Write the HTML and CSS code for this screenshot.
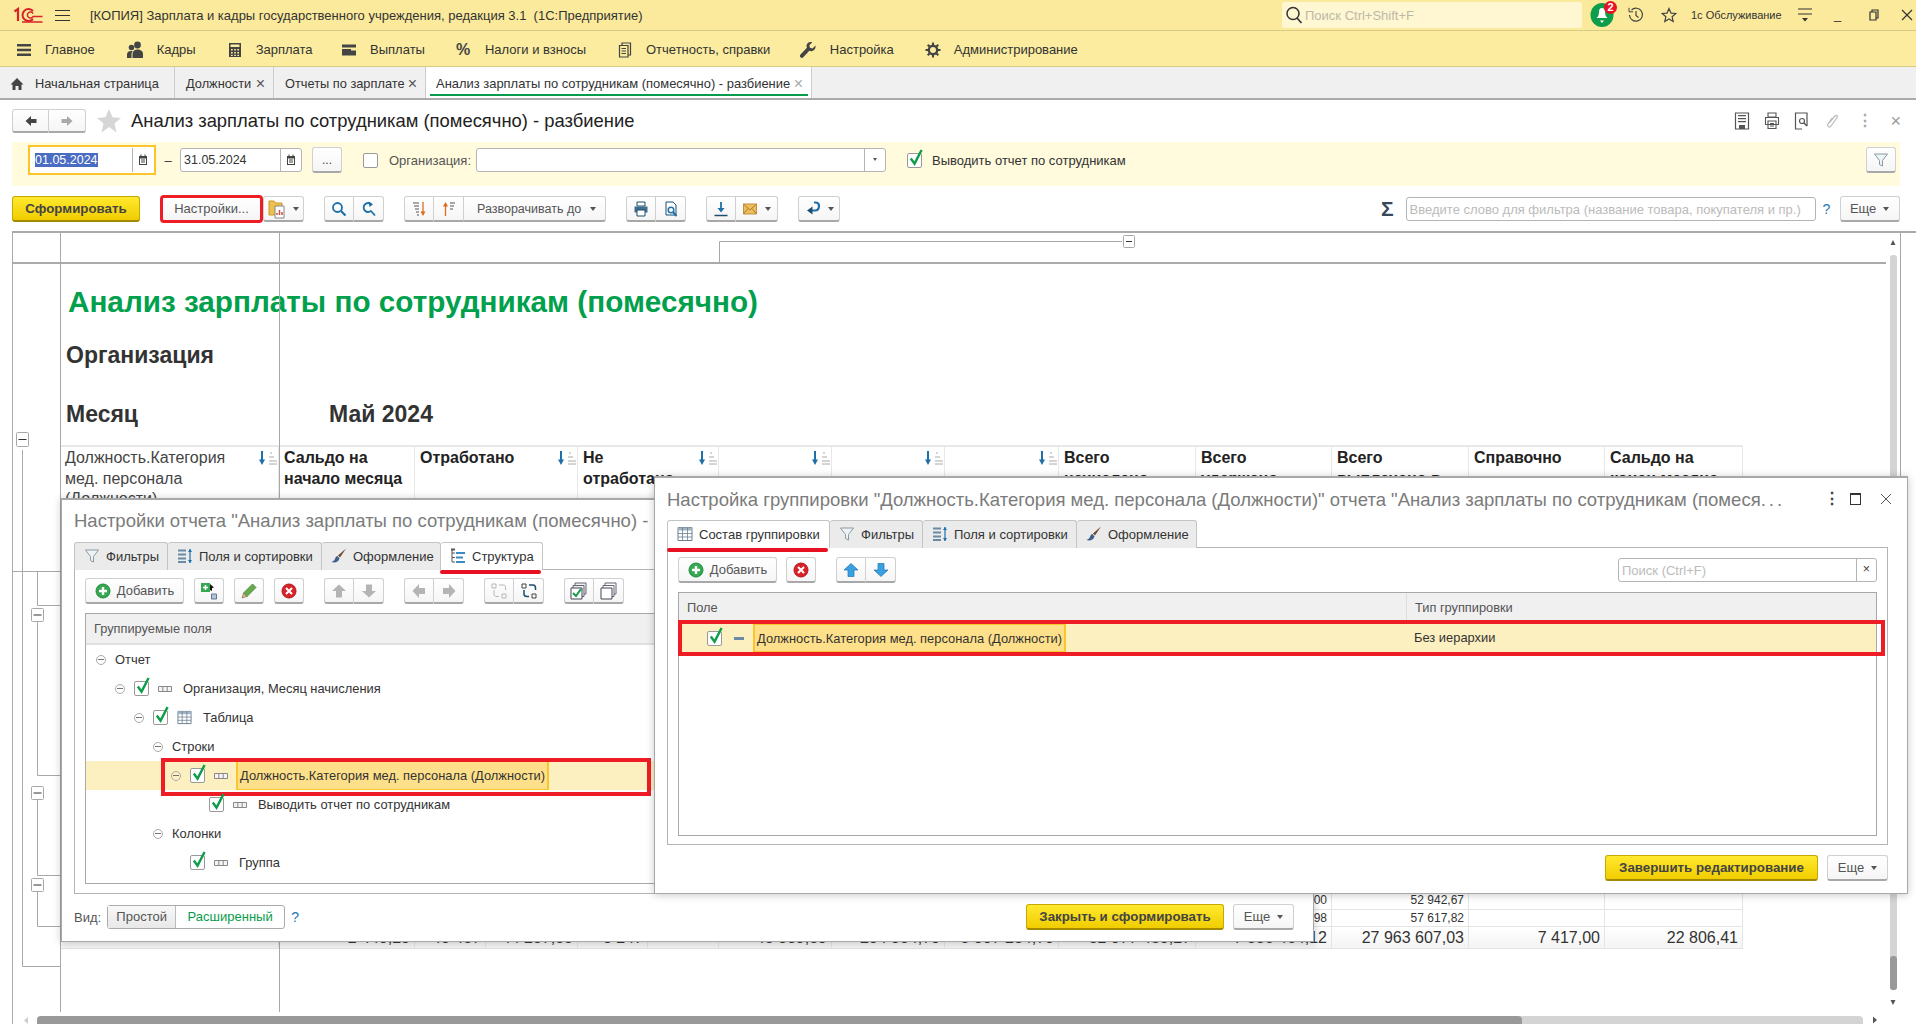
FILE: index.html
```html
<!DOCTYPE html>
<html lang="ru">
<head>
  <meta charset="UTF-8">
  <title>Анализ зарплаты по сотрудникам (помесячно) - разбиение</title>
  <link rel="stylesheet" href="styles.css">
</head>
<body>
  <svg class="sprite" aria-hidden="true">
    <symbol id="i-menu" viewBox="0 0 16 16"><path d="M1 2h14v2.4H1zM1 6.8h14v2.4H1zM1 11.6h14V14H1z" fill="#444"/></symbol>
    <symbol id="i-people" viewBox="0 0 18 18"><circle cx="11.5" cy="4" r="3.4" fill="#444"/><path d="M6.5 17v-4c0-3 2-4.500 5-4.500s5.500 1.500 5.500 4.500v4z" fill="#444"/><circle cx="5.500" cy="6.500" r="2.800" fill="#444"/><path d="M1 17v-3.500c0-2.500 1.800-3.500 4-3.500.6 0 1.200.1 1.700.3-.8.800-1.200 2-1.200 3.200V17z" fill="#444"/></symbol>
    <symbol id="i-calc" viewBox="0 0 16 16"><path fill-rule="evenodd" d="M2 1h12v14H2zM3.500 2.500v2.500h9V2.500zM4 7v1.500h1.700V7zM7.200 7v1.500h1.700V7zM10.300 7v1.500H12V7zM4 10v1.500h1.700V10zM7.200 10v1.500h1.700V10zM10.300 10v1.500H12V10zM4 12.700V14h1.700v-1.300zM7.200 12.700V14h1.700v-1.300zM10.300 12.700V14H12v-1.300z" fill="#444"/></symbol>
    <symbol id="i-wallet" viewBox="0 0 16 16"><path fill-rule="evenodd" d="M1 2.500h14v11H1zM1 5.500h14V7H10v1.500h5V7H1z" fill="#444"/></symbol>
    <symbol id="i-docs" viewBox="0 0 16 16"><path d="M5 3.500V1h8.500v12H11M2.500 3.500H11V15H2.500zM4.500 6.500h4.500M4.500 9h4.500M4.500 11.500h4.500" fill="none" stroke="#444" stroke-width="1.200"/></symbol>
    <symbol id="i-wrench" viewBox="0 0 18 18"><path d="M16.500 4.500l-3 3-2.500-.8-.7-2.500 3-3c-2.500-.9-5 .3-5.600 2.500-.3 1-.2 2 .2 3L1.500 13.500c-.8.900-.8 2 0 2.800s2 .8 2.800 0l6-6.500c1 .4 2 .5 3 .2 2.300-.7 3.700-3 3.200-5.500z" fill="#444"/></symbol>
    <symbol id="i-gear" viewBox="0 0 16 16"><circle cx="8" cy="8" r="4.200" fill="none" stroke="#444" stroke-width="2.400"/><path d="M8 .5v3M8 12.500v3M.5 8h3M12.500 8h3M2.700 2.700l2.100 2.100M11.200 11.200l2.100 2.100M2.700 13.300l2.100-2.100M11.200 4.800l2.100-2.100" stroke="#444" stroke-width="2"/></symbol>
    <symbol id="i-home" viewBox="0 0 14 14"><path d="M7 1L.5 7.500h2V13h3V9h3v4h3V7.500h2z" fill="#444"/></symbol>
    <symbol id="i-left" viewBox="0 0 14 14"><path d="M7 2L1.500 7 7 12V9h5.500V5H7z"/></symbol>
    <symbol id="i-right" viewBox="0 0 14 14"><path d="M7 2l5.500 5L7 12V9H1.500V5H7z"/></symbol>
    <symbol id="i-star" viewBox="0 0 24 24"><path d="M12 0l3.500 8.200 8.500.7-6.500 5.700 2 8.900L12 18l-7.500 5.500 2-8.900L0 8.900l8.500-.7z" fill="#d6d6d6"/></symbol>
    <symbol id="i-star-o" viewBox="0 0 16 16"><path d="M8 1.500l2 4.600 4.800.4-3.700 3.200 1.100 4.800L8 12l-4.200 2.500 1.100-4.800-3.700-3.200L6 6.100z" fill="none" stroke="#444" stroke-width="1.200"/></symbol>
    <symbol id="i-cal" viewBox="0 0 10 12"><path fill-rule="evenodd" d="M1 2h1.500V.5h1V2h3V.5h1V2H9v9H1zM2 4.500V10h6V4.500z" fill="#444"/><path d="M3 5.500h4v1H3zM3 7.500h4v1H3z" fill="#444"/></symbol>
    <symbol id="i-funnel" viewBox="0 0 16 16"><path d="M1.500 2h13L9.500 8.500V14l-3-1.500v-4z" fill="#eef3f6" stroke="#8a9aa5"/></symbol>
    <symbol id="i-lens" viewBox="0 0 16 16"><circle cx="6.500" cy="6.500" r="4.500" fill="none" stroke="#1f6fa8" stroke-width="1.800"/><path d="M10 10l4.500 4.500" stroke="#1f6fa8" stroke-width="2.200"/></symbol>
    <symbol id="i-lens-r" viewBox="0 0 16 16"><path d="M10.500 3.500A4.500 4.500 0 1 0 10.500 9.500M10 10l4 4.500" fill="none" stroke="#1f6fa8" stroke-width="1.800"/><path d="M7.500 .5L12 3.500 8.500 6z" fill="#1f6fa8"/></symbol>
    <symbol id="i-lens-k" viewBox="0 0 18 18"><circle cx="8" cy="7.500" r="6" fill="none" stroke="#333" stroke-width="1.500"/><path d="M12 12l4.500 5" stroke="#333" stroke-width="1.700"/></symbol>
    <symbol id="i-sortdn" viewBox="0 0 16 16"><path d="M12 1v11" stroke="#e06a1f" stroke-width="1.300"/><path d="M9.500 10.500h5L12 15z" fill="#e06a1f"/><path d="M2 2h6M3 5h5M4 8h4M5 11h3M6 14h2" stroke="#555"/></symbol>
    <symbol id="i-sortup" viewBox="0 0 16 16"><path d="M4.500 15V4" stroke="#e06a1f" stroke-width="1.300"/><path d="M2 5.500h5L4.500 1z" fill="#e06a1f"/><path d="M9 2h5M9 5h4M9 8h3" stroke="#555"/></symbol>
    <symbol id="i-report" viewBox="0 0 18 20"><path d="M1 2h5l1.500 2H14v12H1z" fill="#edc04f" stroke="#c99a2a"/><path d="M7 7h9v12H7z" fill="#fff" stroke="#888"/><path d="M9 16v-2M11.500 16v-5M14 16v-3" stroke="#d0503c" stroke-width="1.500"/></symbol>
    <symbol id="i-print" viewBox="0 0 16 16"><path d="M4 1h8v4H4z" fill="#fff" stroke="#1d4f6e"/><path d="M1.500 5.500h13v6h-13z" fill="#3d6d8a"/><path d="M4 9h8v6H4z" fill="#fff" stroke="#1d4f6e"/></symbol>
    <symbol id="i-preview" viewBox="0 0 16 16"><path d="M3 1h7l3 3v10H3z" fill="#fff" stroke="#1d4f6e"/><circle cx="8" cy="9" r="2.800" fill="none" stroke="#1f6fa8" stroke-width="1.500"/><path d="M10 11l3.500 4" stroke="#1f6fa8" stroke-width="2"/></symbol>
    <symbol id="i-down" viewBox="0 0 16 16"><path d="M8 1v9" stroke="#1f6fa8" stroke-width="1.800"/><path d="M4.500 7h7L8 11.500z" fill="#1f6fa8"/><path d="M1.500 14.500h13" stroke="#1d4f6e" stroke-width="1.500"/></symbol>
    <symbol id="i-mail" viewBox="0 0 16 16"><path d="M1.500 3h13v10h-13z" fill="#eebd62" stroke="#c0913c"/><path d="M1.500 3L8 9l6.500-6M1.500 13L6 7.500M14.500 13L10 7.500" fill="none" stroke="#b07c24"/></symbol>
    <symbol id="i-undo" viewBox="0 0 16 16"><path d="M9 1.500h1.500c2.500 0 3.500 1.500 3.500 3.500s-1 4.500-4 4.500H7" fill="none" stroke="#1f6fa8" stroke-width="2.200"/><path d="M7.500 5.500L2 9.500l5.500 4z" fill="#1d4f6e"/></symbol>
    <symbol id="i-save" viewBox="0 0 16 18"><path d="M1.500 1h13v16h-13z" fill="none" stroke="#555" stroke-width="1.200"/><path d="M4 3h8v1.200H4zM4 6h8v1.200H4zM4 9h8v1.200H4zM5 13h6v4H5z" fill="#555"/></symbol>
    <symbol id="i-print-g" viewBox="0 0 16 18"><path d="M4 1h8v4H4zM1.500 5.500h13v7h-13zM4 9h8v7.500H4zM6 11.500h4M6 14h4" fill="#fff" stroke="#555" stroke-width="1.100"/></symbol>
    <symbol id="i-prev-g" viewBox="0 0 16 18"><path d="M13 14V1H1.500v16H8" fill="none" stroke="#555" stroke-width="1.200"/><circle cx="8" cy="9" r="2.500" fill="none" stroke="#555" stroke-width="1.200"/><path d="M10 11l3 3" stroke="#555" stroke-width="1.500"/></symbol>
    <symbol id="i-link" viewBox="0 0 16 18"><path d="M5 11l6-7c1-1.200 3-.2 2.300 1.300L7 14c-1.200 2-4.200.6-3.300-1.500L8 6" fill="none" stroke="#bbb" stroke-width="1.200"/></symbol>
    <symbol id="i-plus" viewBox="0 0 16 16"><circle cx="8" cy="8" r="7" fill="#35a853" stroke="#1f8c3e"/><path d="M4 8h8M8 4v8" stroke="#fff" stroke-width="2.400"/></symbol>
    <symbol id="i-del" viewBox="0 0 16 16"><circle cx="8" cy="8" r="7" fill="#d8232a" stroke="#b3161c"/><path d="M5 5l6 6M11 5l-6 6" stroke="#fff" stroke-width="2"/></symbol>
    <symbol id="i-addsub" viewBox="0 0 18 18"><path d="M1 1h9v9H1z" fill="#35a853"/><path d="M3 5.500h5M5.500 3v5" stroke="#fff" stroke-width="1.500"/><path d="M10 2l4 3.500-2 .5v3L10 8z" fill="#111"/><path d="M11.500 12h5v5h-5z" fill="#b9c6d2" stroke="#5d7a92"/></symbol>
    <symbol id="i-pencil" viewBox="0 0 16 16"><path d="M11.500 1L15 4.500 6 13.500 2.500 10z" fill="#68a94e" stroke="#4a8735" stroke-width=".8"/><path d="M2.500 10L6 13.500 1 15z" fill="#e2b46b" stroke="#555" stroke-width=".5"/></symbol>
    <symbol id="i-up-g" viewBox="0 0 16 16"><path d="M8 1.500L15 8h-4v6.500H5V8H1z" fill="#b4b4b4"/></symbol>
    <symbol id="i-dn-g" viewBox="0 0 16 16"><path d="M8 14.500L15 8h-4V1.500H5V8H1z" fill="#b4b4b4"/></symbol>
    <symbol id="i-lt-g" viewBox="0 0 16 16"><path d="M1.500 8L8 1v4h6v6H8v4z" fill="#b4b4b4"/></symbol>
    <symbol id="i-rt-g" viewBox="0 0 16 16"><path d="M14.500 8L8 1v4H2v6h6v4z" fill="#b4b4b4"/></symbol>
    <symbol id="i-up-b" viewBox="0 0 16 16"><path d="M8 1.500L15 8h-4v6.500H5V8H1z" fill="#3aa0e4" stroke="#2274ab" stroke-width=".7"/></symbol>
    <symbol id="i-dn-b" viewBox="0 0 16 16"><path d="M8 14.500L15 8h-4V1.500H5V8H1z" fill="#3aa0e4" stroke="#2274ab" stroke-width=".7"/></symbol>
    <symbol id="i-swap-g" viewBox="0 0 18 18"><path d="M2 2h4v4H2zM12 12h4v4h-4z" fill="none" stroke="#b8b8b8"/><path d="M9 3h4c2 0 2.500 1 2.500 3v2M4 8v4c0 2 1 2.500 3 2.500h2" fill="none" stroke="#b8b8b8"/></symbol>
    <symbol id="i-swap" viewBox="0 0 18 18"><path d="M2 2h4v4H2zM12 12h4v4h-4z" fill="none" stroke="#444"/><path d="M9 3h4c2 0 2.500 1 2.500 3v2M4 8v4c0 2 1 2.500 3 2.500h2" fill="none" stroke="#1d4f6e" stroke-width="1.500"/></symbol>
    <symbol id="i-checks" viewBox="0 0 18 18"><path d="M5 1h11v11H5z" fill="#eee" stroke="#667"/><path d="M3 3.500h11v11H3z" fill="#eee" stroke="#667"/><path d="M1 6h11v11H1z" fill="#fff" stroke="#445"/><path d="M3 11l3 3 5-7" fill="none" stroke="#129c4b" stroke-width="2"/></symbol>
    <symbol id="i-copies" viewBox="0 0 18 18"><path d="M5 1h11v11H5z" fill="#fff" stroke="#667"/><path d="M3 3.500h11v11H3z" fill="#fff" stroke="#667"/><path d="M1 6h11v11H1z" fill="#fff" stroke="#445"/></symbol>
    <symbol id="i-fields" viewBox="0 0 16 16"><path d="M1 1.500h8v2H1zM1 5.500h8v2H1zM1 9.500h8v2H1zM1 13h8v2H1z" fill="#6a8ba3"/><path d="M13 1v14" stroke="#1f6fa8" stroke-width="1.200"/><path d="M11 4l2-3 2 3zM11 12l2 3 2-3z" fill="#1f6fa8"/></symbol>
    <symbol id="i-brush" viewBox="0 0 16 16"><path d="M15 .5L7 7.500l2 2z" fill="#6d4a2e"/><path d="M6.500 8C4 8.500 4.500 11 3 12.500c-.7.700-1.500 1-2.500 1.500 3 1 7 .5 8-3.500z" fill="#3f5e8c"/></symbol>
    <symbol id="i-tree" viewBox="0 0 16 16"><path d="M2 1v13h3M2 5h3M2 9.500h3" fill="none" stroke="#555"/><path d="M1 .5h4v2H1z" fill="#555"/><path d="M6 4h9v2H6zM6 8.500h7v2H6zM6 13h9v2H6z" fill="#3b8ac4"/></symbol>
    <symbol id="i-table" viewBox="0 0 16 16"><path d="M1 1.500h14v13H1z" fill="#fff" stroke="#6a7f90"/><path d="M1 1.500h14v3H1z" fill="#9fb3c2"/><path d="M5.500 1.500v13M10.500 1.500v13M1 7.500h14M1 11h14" stroke="#6a7f90" stroke-width=".8"/></symbol>
    <symbol id="i-group" viewBox="0 0 14 8"><path d="M.5 1.500h13v5H.5zM4.800 1.500v5M9.200 1.500v5" fill="#f4f4f4" stroke="#888"/></symbol>
    <symbol id="i-check" viewBox="0 0 16 18"><path d="M3 10l4 5.500L14.500 1" fill="none" stroke="#0e9d4b" stroke-width="2.600"/></symbol>
    <symbol id="i-sort" viewBox="0 0 20 16"><path d="M4 1v10" stroke="#1f6fa8" stroke-width="2"/><path d="M1 9.500h6L4 15z" fill="#1f6fa8"/><path d="M12 3h2M11 7h5M11 11h8M11 14h8" stroke="#aaa"/></symbol>
    <symbol id="i-bell" viewBox="0 0 24 24"><ellipse cx="12" cy="12" rx="11.500" ry="12" fill="#0e9d4b"/><path d="M12 5c-2 0-3 1.500-3 4 0 3-1 5-2.500 6h11C16 14 15 12 15 9c0-2.500-1-4-3-4z" fill="#fff"/><path d="M10 17.500h4L12 20z" fill="#fff"/></symbol>
    <symbol id="i-hist" viewBox="0 0 16 16"><path d="M3.500 3A6.500 6.500 0 1 1 1.500 8" fill="none" stroke="#444" stroke-width="1.200"/><path d="M1 .8v4h4" fill="none" stroke="#444"/><path d="M8 4v4.500l2.500 2" fill="none" stroke="#444" stroke-width="1.200"/></symbol>
  </svg>

  <header class="titlebar">
    <svg class="logo" viewBox="0 0 30 16"><g fill="none" stroke="#d8232a"><path d="M1.500 4.500L5 2v12" stroke-width="2.200"/><path d="M20 4a6 6 0 1 0 0 8" stroke-width="2"/><path d="M20 6.500a3 3 0 1 0 0 3h9.500M9 15h20.500" stroke-width="1.500"/></g></svg>
    <svg class="burger" viewBox="0 0 15 13"><path d="M0 1.500h15M0 6.500h15M0 11.500h15" stroke="#333" stroke-width="1.200"/></svg>
    <span class="app-title">[КОПИЯ] Зарплата и кадры государственного учреждения, редакция 3.1&nbsp; (1С:Предприятие)</span>
    <div class="globalsearch"><svg class="ic18"><use href="#i-lens-k"/></svg><span>Поиск Ctrl+Shift+F</span></div>
    <div class="bell"><svg class="ic-bell"><use href="#i-bell"/></svg><b class="badge">2</b></div>
    <svg class="ic16 hist"><use href="#i-hist"/></svg>
    <svg class="ic16 fav"><use href="#i-star-o"/></svg>
    <span class="user">1с Обслуживание</span>
    <svg class="winmenu" viewBox="0 0 14 14"><path d="M0 1h14M0 6h14" stroke="#333" stroke-width="1.200"/><path d="M4 10h6l-3 3.500z" fill="#333"/></svg>
    <span class="winbtn min">_</span>
    <svg class="winbtn-ic" viewBox="0 0 10 12"><path d="M3 3V1h6v8H7M1 3h6v8H1z" fill="none" stroke="#333" stroke-width="1.200"/></svg>
    <svg class="winbtn-x" viewBox="0 0 12 12"><path d="M1 1l10 10M11 1L1 11" stroke="#333" stroke-width="1.200"/></svg>
  </header>

  <nav class="mainmenu">
    <a class="nav-item"><svg class="ic16"><use href="#i-menu"/></svg>Главное</a>
    <a class="nav-item"><svg class="ic18"><use href="#i-people"/></svg>Кадры</a>
    <a class="nav-item"><svg class="ic16"><use href="#i-calc"/></svg>Зарплата</a>
    <a class="nav-item nav-tight"><svg class="ic16"><use href="#i-wallet"/></svg>Выплаты</a>
    <a class="nav-item"><b class="pct">%</b>Налоги и взносы</a>
    <a class="nav-item"><svg class="ic16"><use href="#i-docs"/></svg>Отчетность, справки</a>
    <a class="nav-item nav-tight"><svg class="ic18"><use href="#i-wrench"/></svg>Настройка</a>
    <a class="nav-item"><svg class="ic16"><use href="#i-gear"/></svg>Администрирование</a>
  </nav>

  <div class="pagetabs">
    <div class="ptab ptab-home"><svg class="ic14"><use href="#i-home"/></svg>Начальная страница</div>
    <div class="ptab ptab-pos">Должности<span class="x">×</span></div>
    <div class="ptab ptab-rep">Отчеты по зарплате<span class="x">×</span></div>
    <div class="ptab ptab-active">Анализ зарплаты по сотрудникам (помесячно) - разбиение<span class="x">×</span></div>
  </div>

  <div class="formhead">
    <div class="btn-group navback">
      <button class="btn icon-btn back"><svg class="ic14"><use href="#i-left"/></svg></button>
      <button class="btn icon-btn fwd"><svg class="ic14"><use href="#i-right"/></svg></button>
    </div>
    <svg class="bigstar"><use href="#i-star"/></svg>
    <h1>Анализ зарплаты по сотрудникам (помесячно) - разбиение</h1>
    <div class="formicons">
      <svg class="ic-form"><use href="#i-save"/></svg>
      <svg class="ic-form"><use href="#i-print-g"/></svg>
      <svg class="ic-form"><use href="#i-prev-g"/></svg>
      <svg class="ic-form"><use href="#i-link"/></svg>
      <span class="kebab gray">⋮</span>
      <span class="formclose">×</span>
    </div>
  </div>

  <div class="filterband">
    <div class="focusbox">
      <div class="field date"><span class="sel">01.05.2024</span><i class="cal"><svg class="ic-cal"><use href="#i-cal"/></svg></i></div>
    </div>
    <span class="dash">–</span>
    <div class="field date"><span>31.05.2024</span><i class="cal"><svg class="ic-cal"><use href="#i-cal"/></svg></i></div>
    <button class="btn dots">...</button>
    <span class="chk chk-org"></span>
    <label class="lbl-org">Организация:</label>
    <div class="field org"><i class="drop"></i></div>
    <span class="chk chk-emp"><svg class="tick"><use href="#i-check"/></svg></span>
    <label>Выводить отчет по сотрудникам</label>
    <button class="btn filterbtn"><svg class="ic16"><use href="#i-funnel"/></svg></button>
  </div>

  <div class="toolbar">
    <button class="btn btn-yellow form-btn">Сформировать</button>
    <button class="btn settings-btn">Настройки...</button>
    <button class="btn variant-btn"><svg class="ic-rep"><use href="#i-report"/></svg><i class="caret"></i></button>
    <div class="btn-group tb-gap">
      <button class="btn icon-btn"><svg class="ic16"><use href="#i-lens"/></svg></button>
      <button class="btn icon-btn"><svg class="ic16"><use href="#i-lens-r"/></svg></button>
    </div>
    <div class="btn-group tb-gap">
      <button class="btn icon-btn"><svg class="ic16"><use href="#i-sortdn"/></svg></button>
      <button class="btn icon-btn"><svg class="ic16"><use href="#i-sortup"/></svg></button>
      <button class="btn expand-btn">Разворачивать до<i class="caret"></i></button>
    </div>
    <div class="btn-group tb-gap">
      <button class="btn icon-btn"><svg class="ic16"><use href="#i-print"/></svg></button>
      <button class="btn icon-btn"><svg class="ic16"><use href="#i-preview"/></svg></button>
    </div>
    <div class="btn-group tb-gap">
      <button class="btn icon-btn"><svg class="ic16"><use href="#i-down"/></svg></button>
      <button class="btn mail-btn"><svg class="ic16"><use href="#i-mail"/></svg><i class="caret"></i></button>
    </div>
    <button class="btn mail-btn tb-gap"><svg class="ic16"><use href="#i-undo"/></svg><i class="caret"></i></button>
    <span class="sigma">Σ</span>
    <div class="field wordfilter"><span class="ph">Введите слово для фильтра (название товара, покупателя и пр.)</span></div>
    <a class="help">?</a>
    <button class="btn more-btn">Еще<i class="caret"></i></button>
  </div>

  <section class="sheet">
    <div class="sheet-head"></div>
    <div class="report">
      <div class="rep-title">Анализ зарплаты по сотрудникам (помесячно)</div>
      <div class="rep-org">Организация</div>
      <div class="rep-month"><span>Месяц</span><span class="month-val">Май 2024</span></div>
      <div class="rep-row rep-headrow">
        <div class="hc c-first">Должность.Категория мед. персонала (Должности)<svg class="sort"><use href="#i-sort"/></svg></div>
        <div class="hc hc-narrow"><b>Сальдо на начало месяца</b></div>
        <div class="hc span2"><b>Отработано</b><svg class="sort"><use href="#i-sort"/></svg></div>
        <div class="hc span2"><b>Не отработано</b><svg class="sort"><use href="#i-sort"/></svg></div>
        <div class="hc"><svg class="sort"><use href="#i-sort"/></svg></div>
        <div class="hc"><svg class="sort"><use href="#i-sort"/></svg></div>
        <div class="hc"><svg class="sort"><use href="#i-sort"/></svg></div>
        <div class="hc hc-narrow"><b>Всего начислено</b></div>
        <div class="hc hc-narrow"><b>Всего удержано</b></div>
        <div class="hc hc-narrow"><b>Всего выплачено в банк</b></div>
        <div class="hc hc-narrow"><b>Справочно</b></div>
        <div class="hc hc-narrow"><b>Сальдо на конец месяца</b></div>
      </div>
      <div class="rep-row rep-spacer"></div>
      <div class="rep-row rep-small">
        <div></div><div></div><div></div><div></div><div></div><div></div><div></div><div></div><div></div><div></div><div>1 204 518,00</div><div>52 942,67</div><div></div><div></div>
      </div>
      <div class="rep-row rep-small">
        <div></div><div></div><div></div><div></div><div></div><div></div><div></div><div></div><div></div><div></div><div>1 317 640,98</div><div>57 617,82</div><div></div><div></div>
      </div>
      <div class="rep-row rep-total">
        <div></div><div>2 440,25</div><div>40 437</div><div>44 257,05</div><div>3 247</div><div class="hash">########</div><div>48 889,89</div><div>204 954,70</div><div>5 907 234,70</div><div>32 977 430,27</div><div>7 586 464,12</div><div>27 963 607,03</div><div>7 417,00</div><div>22 806,41</div>
      </div>
    </div>

    <svg class="outline" viewBox="12 231 1889 793">
      <g fill="none" stroke="#a8a8a8">
        <path d="M60.500 231v781M279.500 231v781M1900.500 231v460"/>
        <path d="M719.500 264V241.500H1122"/>
        <path d="M22.500 450V966.500H60M12 571.500H60"/>
        <path d="M37.500 571v34.500H60M37.500 621V775.500H60M37.500 799V875.500H60M37.500 891V926.500H60"/>
        <g fill="#fff">
          <rect x="1123.500" y="235.500" width="11" height="12" rx="1"/>
          <rect x="16.500" y="432.500" width="12" height="14" rx="1"/>
          <rect x="31.500" y="608.500" width="12" height="13" rx="1"/>
          <rect x="31.500" y="786.500" width="12" height="13" rx="1"/>
          <rect x="31.500" y="878.500" width="12" height="13" rx="1"/>
        </g>
      </g>
      <path d="M1126 241.500h6M18.500 439.500h8M33.500 615h8M33.500 793h8M33.500 885h8" stroke="#333"/>
      <path d="M1893 240l-2.500 5h5zM1893 1005l-2.500-5h5z" fill="#555"/>
      <path d="M28 1017v7l-4-3.500z" fill="#ccc"/>
      <path d="M1873 1016.500v7l4-3.500z" fill="#555"/>
    </svg>
    <div class="vscroll"><div class="vthumb"></div></div>
    <div class="hscroll"><div class="hthumb"></div></div>
  </section>

  <div class="dialog dlg-settings">
    <div class="dlg-title">Настройки отчета "Анализ зарплаты по сотрудникам (помесячно) - разбиение"</div>
    <div class="dtabs">
      <div class="dtab tab-f"><svg class="ic16"><use href="#i-funnel"/></svg>Фильтры</div>
      <div class="dtab tab-s"><svg class="ic16"><use href="#i-fields"/></svg>Поля и сортировки</div>
      <div class="dtab tab-o"><svg class="ic16"><use href="#i-brush"/></svg>Оформление</div>
      <div class="dtab dtab-active marked tab-st"><svg class="ic16"><use href="#i-tree"/></svg>Структура</div>
    </div>
    <div class="dpanel panel-settings">
      <div class="dtoolbar">
        <button class="btn add-btn"><svg class="ic16"><use href="#i-plus"/></svg>Добавить</button>
        <button class="btn square"><svg class="ic18"><use href="#i-addsub"/></svg></button>
        <button class="btn square"><svg class="ic16"><use href="#i-pencil"/></svg></button>
        <button class="btn square"><svg class="ic16"><use href="#i-del"/></svg></button>
        <div class="btn-group g-sep">
          <button class="btn square"><svg class="ic16"><use href="#i-up-g"/></svg></button>
          <button class="btn square"><svg class="ic16"><use href="#i-dn-g"/></svg></button>
        </div>
        <div class="btn-group g-sep">
          <button class="btn square"><svg class="ic16"><use href="#i-lt-g"/></svg></button>
          <button class="btn square"><svg class="ic16"><use href="#i-rt-g"/></svg></button>
        </div>
        <div class="btn-group g-sep">
          <button class="btn square"><svg class="ic18"><use href="#i-swap-g"/></svg></button>
          <button class="btn square"><svg class="ic18"><use href="#i-swap"/></svg></button>
        </div>
        <div class="btn-group g-sep">
          <button class="btn square"><svg class="ic18"><use href="#i-checks"/></svg></button>
          <button class="btn square"><svg class="ic18"><use href="#i-copies"/></svg></button>
        </div>
      </div>
      <div class="dtable tree">
        <div class="thead"><span>Группируемые поля</span></div>
        <div class="trow lv0"><i class="minus"></i>Отчет</div>
        <div class="trow lv1"><i class="minus"></i><span class="chk"><svg class="tick"><use href="#i-check"/></svg></span><svg class="ic-group"><use href="#i-group"/></svg>Организация, Месяц начисления</div>
        <div class="trow lv2"><i class="minus"></i><span class="chk"><svg class="tick"><use href="#i-check"/></svg></span><svg class="ic-tbl"><use href="#i-table"/></svg>Таблица</div>
        <div class="trow lv3"><i class="minus"></i>Строки</div>
        <div class="trow lv4 trow-sel"><i class="minus"></i><span class="chk"><svg class="tick"><use href="#i-check"/></svg></span><svg class="ic-group"><use href="#i-group"/></svg><span class="curcell">Должность.Категория мед. персонала (Должности)</span><i class="redbox redbox-tree"></i></div>
        <div class="trow lv5"><span class="chk"><svg class="tick"><use href="#i-check"/></svg></span><svg class="ic-group"><use href="#i-group"/></svg>Выводить отчет по сотрудникам</div>
        <div class="trow lv3"><i class="minus"></i>Колонки</div>
        <div class="trow lv6"><span class="chk"><svg class="tick"><use href="#i-check"/></svg></span><svg class="ic-group"><use href="#i-group"/></svg>Группа</div>
      </div>
    </div>
    <div class="dfoot">
      <span class="vid">Вид:</span>
      <div class="seg"><span class="seg-on">Простой</span><span class="seg-off">Расширенный</span></div>
      <a class="help">?</a>
      <button class="btn btn-yellow close-btn">Закрыть и сформировать</button>
      <button class="btn more-btn">Еще<i class="caret"></i></button>
    </div>
  </div>

  <div class="dialog dlg-group">
    <div class="dlg-title dlg-title-row">
      <span class="dlg-title-text">Настройка группировки "Должность.Категория мед. персонала (Должности)" отчета "Анализ зарплаты по сотрудникам (помеся<span class="ell">...</span></span>
      <span class="kebab">⋮</span>
      <i class="maxbtn"></i>
      <svg class="dlgclose" viewBox="0 0 12 12"><path d="M1 1l10 10M11 1L1 11" stroke="#555"/></svg>
    </div>
    <div class="dtabs">
      <div class="dtab dtab-active marked tab-sost"><svg class="ic16"><use href="#i-table"/></svg>Состав группировки</div>
      <div class="dtab tab-f2"><svg class="ic16"><use href="#i-funnel"/></svg>Фильтры</div>
      <div class="dtab tab-s2"><svg class="ic16"><use href="#i-fields"/></svg>Поля и сортировки</div>
      <div class="dtab tab-o2"><svg class="ic16"><use href="#i-brush"/></svg>Оформление</div>
    </div>
    <div class="dpanel panel-group">
      <div class="dtoolbar">
        <button class="btn add-btn"><svg class="ic16"><use href="#i-plus"/></svg>Добавить</button>
        <button class="btn square del2"><svg class="ic16"><use href="#i-del"/></svg></button>
        <div class="btn-group g-sep2">
          <button class="btn square"><svg class="ic16"><use href="#i-up-b"/></svg></button>
          <button class="btn square"><svg class="ic16"><use href="#i-dn-b"/></svg></button>
        </div>
        <div class="field searchf"><span class="ph">Поиск (Ctrl+F)</span><i class="clear">×</i></div>
      </div>
      <div class="dtable grouptable">
        <div class="thead cols2"><span>Поле</span><span class="th-type">Тип группировки</span></div>
        <div class="grow cols2">
          <div class="grow-left"><span class="chk"><svg class="tick"><use href="#i-check"/></svg></span><i class="dash-ic"></i><span class="curcell">Должность.Категория мед. персонала (Должности)</span></div>
          <div class="grow-right">Без иерархии</div>
          <i class="redbox redbox-group"></i>
        </div>
      </div>
    </div>
    <div class="dfoot dfoot-end">
      <button class="btn btn-yellow finish-btn">Завершить редактирование</button>
      <button class="btn more-btn">Еще<i class="caret"></i></button>
    </div>
  </div>
</body>
</html>
```

FILE: styles.css
```css
* {
  box-sizing: border-box;
}
html, body {
  margin: 0;
  height: 100%;
}
body {
  width: 1916px;
  height: 1024px;
  overflow: hidden;
  position: relative;
  background: #fff;
  color: #333;
  font: 13px "Liberation Sans", Arial, sans-serif;
}
.sprite {
  position: absolute;
  width: 0;
  height: 0;
}
.ic14 { width: 14px; height: 14px; flex: none; }
.ic16 { width: 16px; height: 16px; flex: none; }
.ic18 { width: 18px; height: 18px; flex: none; }

/* top bars */
.titlebar {
  height: 31px;
  background: #fbea9c;
  border-bottom: 1px solid #d8cb84;
  display: flex;
  align-items: center;
  padding-left: 13px;
}
.logo { width: 30px; height: 16px; flex: none; }
.burger { width: 15px; height: 13px; margin-left: 12px; flex: none; }
.app-title { margin-left: 20px; width: 1192px; white-space: nowrap; }
.globalsearch {
  width: 300px;
  height: 26px;
  background: #fff6d2;
  border-radius: 3px;
  display: flex;
  align-items: center;
  padding-left: 3px;
  gap: 2px;
  color: #bdb9a8;
  font-size: 13px;
  flex: none;
}
.bell { position: relative; margin-left: 8px; height: 24px; flex: none; }
.ic-bell { width: 24px; height: 24px; display: block; }
.badge {
  position: absolute;
  left: 14px;
  top: -2px;
  width: 13px;
  height: 13px;
  border-radius: 50%;
  background: #e81123;
  color: #fff;
  font-size: 11px;
  line-height: 13px;
  text-align: center;
}
.hist { margin-left: 14px; }
.fav { margin-left: 17px; }
.user { margin-left: 14px; width: 104px; font-size: 11px; white-space: nowrap; flex: none; }
.winmenu { width: 14px; height: 14px; margin-left: 3px; flex: none; }
.winbtn.min { margin-left: 22px; width: 9px; font-size: 13px; line-height: 8px; flex: none; }
.winbtn-ic { width: 10px; height: 12px; margin-left: 26px; flex: none; }
.winbtn-x { width: 12px; height: 12px; margin-left: 22px; flex: none; }

.mainmenu {
  height: 36px;
  background: #fbec9f;
  border-bottom: 1px solid #d8cb84;
  display: flex;
  align-items: center;
  padding: 2px 0 0 16px;
  gap: 31px;
}
.nav-item {
  display: flex;
  align-items: center;
  gap: 13px;
  white-space: nowrap;
}
.nav-tight { margin-left: -2.500px; }
.pct { width: 16px; font-size: 16px; color: #444; }

.pagetabs {
  height: 33px;
  background: #f0f0f0;
  border-bottom: 2px solid #aaa;
  display: flex;
  font-size: 12.800px;
}
.ptab {
  display: flex;
  align-items: center;
  padding: 2px 8px 0 11px;
  border-right: 1px solid #ccc;
  white-space: nowrap;
  position: relative;
}
.ptab .x { margin-left: auto; font-size: 16px; color: #555; }
.ptab-home { width: 175px; padding-left: 10px; gap: 11px; }
.ptab-pos { width: 99px; }
.ptab-rep { width: 152px; }
.ptab-active {
  background: #fff;
  width: 386px;
  padding-left: 10px;
  font-size: 12.950px;
}
.ptab-active::after {
  content: "";
  position: absolute;
  left: 4px;
  right: 3px;
  bottom: 2px;
  height: 2px;
  background: #079c4c;
}
.ptab-active .x { color: #aaa; }

.formhead {
  height: 42px;
  display: flex;
  align-items: center;
  padding-left: 12px;
}
.navback .btn { width: 37px; height: 24px; }
.back { fill: #444; }
.fwd { fill: #aaa; }
.bigstar { width: 24px; height: 24px; margin-left: 11px; flex: none; }
h1 {
  margin: 0 0 0 10px;
  font-size: 18.400px;
  font-weight: normal;
  color: #222;
  white-space: nowrap;
}
.formicons {
  margin-left: auto;
  display: flex;
  align-items: center;
  padding-right: 15px;
  gap: 14px;
}
.ic-form { width: 16px; height: 18px; flex: none; }
.kebab { font-size: 16px; font-weight: bold; color: #555; line-height: 16px; }
.kebab.gray { color: #aaa; margin-left: 3px; margin-right: 3px; }
.formclose { font-size: 18px; color: #999; line-height: 16px; }

/* form fields */
.btn {
  font: inherit;
  color: #444;
  background: linear-gradient(#fff, #f5f5f5);
  border: 1px solid #d0d0d0;
  border-bottom: 2px solid #a8a8a8;
  border-radius: 3px;
  padding: 0;
  height: 26px;
  display: flex;
  align-items: center;
  justify-content: center;
}
.btn-yellow {
  background: linear-gradient(#ffe92e, #f0cd00);
  border: 1px solid #c8a800;
  border-bottom: 2px solid #a38a00;
  color: #444;
  font-weight: bold;
  font-size: 13.300px;
}
.btn-group { display: flex; }
.btn-group .btn { border-radius: 0; border-left: none; }
.btn-group .btn:first-child { border-left: 1px solid #d0d0d0; border-radius: 3px 0 0 3px; }
.btn-group .btn:last-child { border-radius: 0 3px 3px 0; }
.caret {
  display: inline-block;
  width: 0;
  height: 0;
  margin-left: 7px;
  border: 3px solid transparent;
  border-top: 4px solid #555;
  border-bottom: none;
}
.field {
  height: 24px;
  background: #fff;
  border: 1px solid #b4b4b4;
  border-radius: 3px;
  display: flex;
  align-items: center;
  font-size: 12.500px;
  padding-left: 3px;
}
.ph { color: #bbb; white-space: nowrap; font-size: 13px; }
.chk {
  width: 15px;
  height: 15px;
  background: #fff;
  border: 1px solid #999;
  border-radius: 2px;
  display: block;
  position: relative;
  flex: none;
}
.tick {
  position: absolute;
  left: 0;
  top: -5px;
  width: 15px;
  height: 17px;
}
.help { color: #1f78b4; font-size: 14px; }

.filterband {
  height: 44px;
  margin: 0 16px 0 12px;
  background: #fffbdc;
  display: flex;
  align-items: center;
  padding: 0 0 8px 16px;
  white-space: nowrap;
}
.focusbox {
  width: 128px;
  height: 30px;
  border: 2px solid #fcc52c;
  padding: 1px;
  background: #fff;
}
.focusbox .field { border: none; height: 24px; width: 100%; padding-left: 4px; }
.date { width: 122px; position: relative; }
.sel { background: #4a6cc2; color: #fff; }
.cal {
  margin-left: auto;
  width: 21px;
  height: 100%;
  border-left: 1px solid #b4b4b4;
  display: flex;
  align-items: center;
  justify-content: center;
}
.ic-cal { width: 10px; height: 12px; }
.dash { width: 24px; text-align: center; }
.dots { width: 30px; margin-left: 10px; font-size: 12px; }
.chk-org { margin-left: 21px; }
.lbl-org { margin-left: 11px; color: #555; }
.org { width: 410px; margin-left: 5px; }
.drop {
  margin-left: auto;
  width: 21px;
  height: 100%;
  border-left: 1px solid #b4b4b4;
  position: relative;
}
.drop::after {
  content: "";
  position: absolute;
  left: 8px;
  top: 9px;
  border: 2px solid transparent;
  border-top: 3px solid #555;
}
.chk-emp { margin-left: 21px; margin-right: 10px; }
.filterbtn { width: 30px; margin-left: auto; margin-right: 4px; }

.toolbar {
  height: 26px;
  margin-top: 10px;
  padding-left: 12px;
  display: flex;
  align-items: center;
  white-space: nowrap;
}
.form-btn { width: 128px; }
.settings-btn {
  width: 101px;
  margin-left: 21px;
  outline: 3px solid #ee1c25;
  outline-offset: -2px;
  color: #555;
}
.variant-btn { width: 41px; margin-left: 1px; }
.ic-rep { width: 18px; height: 20px; }
.tb-gap { margin-left: 20px; }
.icon-btn { width: 30px; }
.expand-btn {
  width: 142px;
  color: #555;
  font-size: 12.500px;
  justify-content: flex-start;
  padding-left: 13px;
}
.expand-btn .caret { margin-left: 9px; }
.mail-btn { width: 42px; }
.sigma { margin-left: 541px; font-size: 21px; font-weight: bold; color: #36485a; }
.wordfilter { width: 410px; margin-left: 12px; }
.toolbar .help { margin-left: 7px; width: 17px; }
.more-btn { width: 61px; color: #555; }
.toolbar .more-btn { width: 60px; }

/* report sheet */
.sheet {
  position: relative;
  height: 793px;
  margin: 9px 0 0 12px;
  border-top: 2px solid #aaa;
  border-left: 1px solid #aaa;
  overflow: hidden;
}
.sheet-head {
  height: 31px;
  width: 1873px;
  border-bottom: 2px solid #aaa;
}
.report { padding: 21px 0 0 47px; }
.rep-title {
  font-size: 29.700px;
  line-height: 34px;
  font-weight: bold;
  color: #00a04c;
  padding-left: 8px;
}
.rep-org {
  margin-top: 22px;
  font-size: 23px;
  line-height: 28px;
  font-weight: bold;
  padding-left: 6px;
}
.rep-month {
  margin-top: 31px;
  font-size: 23px;
  line-height: 28px;
  font-weight: bold;
  padding-left: 6px;
  display: flex;
}
.month-val { margin-left: 191px; }
.rep-row {
  width: 1683px;
  display: grid;
  grid-template-columns: 219px 136px 71px 92px 70px 71px 113px 113px 114px 137px 136px 137px 136px 138px;
}
.rep-headrow {
  margin-top: 17px;
  height: 126px;
  border-top: 2px solid #e8e8e8;
  font-size: 16px;
  line-height: 20.500px;
  color: #222;
}
.hc {
  position: relative;
  padding: 1px 22px 0 5px;
  border-right: 1px solid #e8e8e8;
}
.hc b { display: block; }
.hc-narrow { padding-right: 4px; }
.span2 { grid-column: span 2; }
.c-first { color: #444; }
.sort {
  position: absolute;
  right: 0;
  top: 3px;
  width: 20px;
  height: 16px;
}
.rep-spacer { height: 321px; border-bottom: 1px solid #e4e4e4; }
.rep-small, .rep-total { border-bottom: 1px solid #e4e4e4; text-align: right; }
.rep-small > div, .rep-total > div {
  border-right: 1px solid #e4e4e4;
  padding-right: 4px;
  white-space: nowrap;
  overflow: hidden;
}
.rep-small { height: 17.500px; font-size: 12px; line-height: 17px; }
.rep-small > div:nth-child(-n+10) { border-right-color: transparent; }
.rep-total { height: 22px; font-size: 16px; line-height: 21px; background: linear-gradient(#fff, #f4f4f4); }
.rep-total .hash { color: #1f78b4; font-size: 14px; }
.outline {
  position: absolute;
  left: -1px;
  top: -2px;
  width: 1889px;
  height: 793px;
}
.vscroll {
  position: absolute;
  left: 1877px;
  top: 22px;
  width: 7px;
  height: 735px;
  background: #d4d4d4;
  border-radius: 3px;
}
.vthumb {
  position: absolute;
  left: 0;
  right: 0;
  bottom: 0;
  height: 34px;
  background: #999;
  border-radius: 3px;
}
.hscroll {
  position: absolute;
  left: 24px;
  bottom: 0;
  width: 1826px;
  height: 8px;
  background: #d4d4d4;
  border-radius: 4px 4px 0 0;
}
.hthumb {
  width: 1485px;
  height: 8px;
  background: #999;
  border-radius: 4px 4px 0 0;
}

/* dialogs */
.dialog {
  position: absolute;
  background: #fff;
  border: 1px solid #a8a8a8;
  border-top-width: 2px;
  box-shadow: 0 1px 8px rgba(0, 0, 0, .22);
  padding: 0 19px 0 12px;
}
.dlg-settings { left: 61px; top: 498px; width: 1253px; height: 444px; }
.dlg-group { left: 654px; top: 476px; width: 1254px; height: 418px; }
.dlg-title {
  height: 42px;
  font-size: 18.500px;
  line-height: 41px;
  color: #7b7b7b;
  white-space: nowrap;
  overflow: hidden;
}
.dlg-title-row { display: flex; align-items: center; margin-right: -15px; }
.dlg-title-text {
  width: 1131px;
  overflow: hidden;
  flex: none;
}
.ell { letter-spacing: 3px; }
.dlg-title-row .kebab { margin-left: 26px; width: 6px; color: #444; }
.maxbtn {
  width: 11px;
  height: 12px;
  margin-left: 20px;
  border: 1px solid #333;
  border-top-width: 2px;
  flex: none;
}
.dlgclose { width: 12px; height: 12px; margin-left: 19px; flex: none; }
.dtabs { display: flex; height: 28px; position: relative; z-index: 1; }
.dtab {
  display: flex;
  align-items: center;
  gap: 6px;
  padding: 0 0 1px 9px;
  height: 28px;
  background: #ebebeb;
  border: 1px solid #c4c4c4;
  border-bottom: none;
  border-left: none;
  border-radius: 3px 3px 0 0;
  white-space: nowrap;
  position: relative;
}
.dtab:first-child { border-left: 1px solid #c4c4c4; }
.dtab-active { background: #fff; }
.marked::after {
  content: "";
  position: absolute;
  left: -1px;
  right: 1px;
  bottom: -4px;
  height: 4px;
  background: #e81123;
  border-radius: 2px;
}
.tab-f { width: 94px; }
.tab-s { width: 154px; }
.tab-o { width: 119px; }
.tab-st { width: 102px; }
.tab-sost { width: 163px; }
.tab-f2 { width: 93px; }
.tab-s2 { width: 154px; }
.tab-o2 { width: 120px; }
.dpanel {
  border: 1px solid #b4b4b4;
  padding: 8px 10px;
  margin-top: -1px;
}
.panel-settings { height: 325px; }
.panel-group { height: 298px; padding-top: 9px; }
.dtoolbar { display: flex; height: 26px; gap: 10px; margin-bottom: 9px; align-items: center; }
.add-btn { width: 99px; gap: 6px; color: #555; }
.square { width: 30px; }
.g-sep { margin-left: 10px; }
.g-sep2 { margin-left: 10px; }
.dtable { border: 1px solid #a8a8a8; }
.tree { height: 271px; }
.grouptable { height: 244px; }
.thead {
  height: 31px;
  background: #f0f0f0;
  border-bottom: 2px solid #e0e0e0;
  display: flex;
  align-items: center;
  padding-left: 8px;
  color: #555;
  font-size: 12.800px;
}
.trow {
  height: 29px;
  display: flex;
  align-items: center;
  gap: 9px;
  white-space: nowrap;
  font-size: 12.900px;
  position: relative;
}
.lv0 { padding-left: 10px; }
.lv1 { padding-left: 29px; }
.lv2 { padding-left: 48px; }
.lv3 { padding-left: 67px; }
.lv4 { padding-left: 85px; }
.lv5 { padding-left: 123px; }
.lv6 { padding-left: 104px; }
.minus {
  width: 10px;
  height: 10px;
  border: 1px solid #aaa;
  border-radius: 50%;
  position: relative;
  flex: none;
}
.minus::after {
  content: "";
  position: absolute;
  left: 1px;
  right: 1px;
  top: 3px;
  height: 1px;
  background: #777;
}
.ic-group { width: 14px; height: 8px; flex: none; margin-right: 2px; }
.ic-tbl { width: 15px; height: 15px; flex: none; margin-right: 2px; }
.trow-sel { background: #fdf0c0; }
.curcell {
  background: #ffe08a;
  border: 2px solid #fcc52c;
  border-top-width: 1px;
  border-bottom-width: 1px;
  padding: 0 2px;
  height: 100%;
  width: 313px;
  display: flex;
  align-items: center;
  flex: none;
  white-space: nowrap;
}
.trow-sel .curcell { margin-left: -3px; }
.redbox {
  position: absolute;
  border: 4px solid #ee1c25;
  pointer-events: none;
}
.redbox-tree { left: 75px; right: 631px; top: -3px; bottom: -6px; }
.dfoot {
  display: flex;
  align-items: center;
  margin-top: 10px;
  height: 26px;
}
.vid { color: #555; margin-right: 6px; }
.seg {
  display: flex;
  height: 24px;
  border: 1px solid #aaa;
  border-radius: 3px;
  line-height: 22px;
}
.seg-on {
  width: 68px;
  text-align: center;
  background: linear-gradient(#f8f8f8, #e8e8e8);
  border-right: 1px solid #bbb;
  color: #555;
}
.seg-off { width: 108px; text-align: center; color: #079c4c; }
.dfoot .help { margin-left: 6px; }
.close-btn { width: 198px; margin-left: auto; }
.dfoot .more-btn { margin-left: 9px; }
.dfoot-end { justify-content: flex-end; }
.finish-btn { width: 213px; }
.del2 { margin-left: -1px; }
.searchf { width: 259px; margin-left: auto; position: relative; }
.clear {
  margin-left: auto;
  width: 20px;
  height: 100%;
  border-left: 1px solid #b4b4b4;
  text-align: center;
  font-style: normal;
  line-height: 21px;
  color: #444;
}
.cols2 { display: grid; grid-template-columns: 727px 1fr; padding-left: 0; }
.thead.cols2 span { padding-left: 8px; }
.th-type { border-left: 1px solid #ddd; height: 100%; display: flex; align-items: center; }
.grow {
  height: 28px;
  background: #fdf0c0;
  position: relative;
  font-size: 12.900px;
}
.grow-left {
  display: flex;
  align-items: center;
  padding-left: 28px;
  height: 100%;
}
.dash-ic {
  width: 10px;
  height: 3px;
  margin-left: 12px;
  margin-right: 9px;
  background: #6a8ba3;
  flex: none;
}
.grow-right { padding-left: 8px; line-height: 28px; }
.redbox-group { left: -1px; right: -9px; top: -4px; bottom: -4px; }
```
